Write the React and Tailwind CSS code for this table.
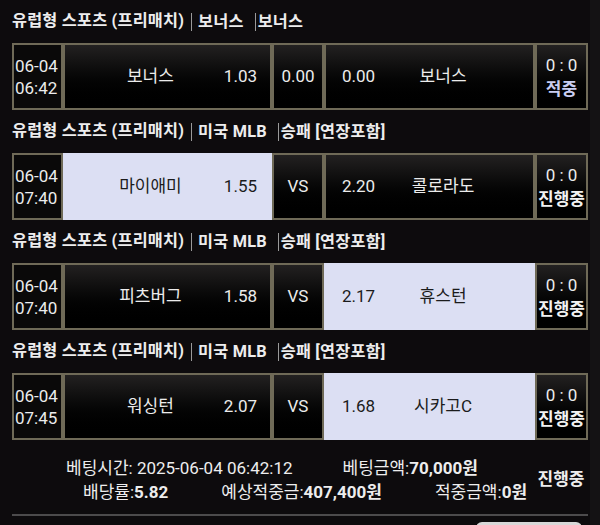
const bets = [
  {
    tags: ['보너스', '보너스'],
    date: '06-04',
    time: '06:42',
    home: '보너스',
    homeOdds: '1.03',
    mid: '0.00',
    awayOdds: '0.00',
    away: '보너스',
    status: '적중',
    pick: null,
  },
  {
    tags: ['미국 MLB', '승패 [연장포함]'],
    date: '06-04',
    time: '07:40',
    home: '마이애미',
    homeOdds: '1.55',
    mid: 'VS',
    awayOdds: '2.20',
    away: '콜로라도',
    status: '진행중',
    pick: 'home',
  },
  {
    tags: ['미국 MLB', '승패 [연장포함]'],
    date: '06-04',
    time: '07:40',
    home: '피츠버그',
    homeOdds: '1.58',
    mid: 'VS',
    awayOdds: '2.17',
    away: '휴스턴',
    status: '진행중',
    pick: 'away',
  },
  {
    tags: ['미국 MLB', '승패 [연장포함]'],
    date: '06-04',
    time: '07:45',
    home: '워싱턴',
    homeOdds: '2.07',
    mid: 'VS',
    awayOdds: '1.68',
    away: '시카고C',
    status: '진행중',
    pick: 'away',
  },
]

const dark = 'border-2 border-[#6f6a57] bg-gradient-to-b from-[#232121] via-[#070707] to-black text-[#ececec]'
const picked = 'border-2 border-[#dcdff3] bg-[#dcdff3] text-[#1b1b1b]'

function BetRow({ bet }) {
  return (
    <div>
      {/* league header */}
      <div className="h-[43px] flex items-center text-[16.3px] font-bold text-[#ededed] tracking-[0.2px]">
        <span>유럽형 스포츠 (프리매치)</span>
        <span className="ml-[7px] pl-[6px] border-l border-[#9a9a9a] leading-[18px]">{bet.tags[0]}</span>
        <span className="ml-[11px] pl-[2px] border-l border-[#9a9a9a] leading-[18px]">{bet.tags[1]}</span>
      </div>

      <div className="flex h-[67px] text-[17px]">
        <div className="w-[51px] flex flex-col justify-center pl-[1px] leading-[22px] border-2 border-[#6f6a57] bg-[#0a0909] text-[#ececec]">
          <span>{bet.date}</span>
          <span>{bet.time}</span>
        </div>
        <div className={`w-[209px] flex items-center pr-[13px] ${bet.pick === 'home' ? picked : dark}`}>
          <span className="flex-1 text-center pl-[12px]">{bet.home}</span>
          <span>{bet.homeOdds}</span>
        </div>
        <div className={`w-[52px] flex items-center justify-center ${dark}`}>{bet.mid}</div>
        <div className={`w-[211px] flex items-center pl-[16px] ${bet.pick === 'away' ? picked : dark}`}>
          <span>{bet.awayOdds}</span>
          <span className="flex-1 text-center pr-[22px]">{bet.away}</span>
        </div>
        <div className={`w-[53px] flex flex-col items-center justify-center leading-[24px] ${dark}`}>
          <span>0 : 0</span>
          <span className={`font-bold ${bet.status === '적중' ? 'text-[#c9cdf1]' : 'text-[#f2f2f2]'}`}>{bet.status}</span>
        </div>
      </div>
    </div>
  )
}

export default function App() {
  return (
    <div className="w-[600px] h-[525px] overflow-hidden bg-[#141214] font-['Roboto','Noto_Sans_CJK_KR',sans-serif]">
      <div className="w-[590px] h-full bg-[#0d0b0d] px-[12px] pr-[2px]">
        {bets.map((bet, i) => (
          <BetRow key={i} bet={bet} />
        ))}

        {/* summary */}
        <div className="flex h-[74px] items-center text-[17px] text-[#ededed]">
          <div className="flex-1 flex flex-col leading-[24px] pt-[6px]">
            <div className="flex gap-[50px] pl-[54px]">
              <span>베팅시간: 2025-06-04 06:42:12</span>
              <span>베팅금액:<b>70,000원</b></span>
            </div>
            <div className="flex gap-[53px] pl-[71px]">
              <span>배당률:<b>5.82</b></span>
              <span>예상적중금:<b>407,400원</b></span>
              <span>적중금액:<b>0원</b></span>
            </div>
          </div>
          <div className="w-[54px] text-center font-bold pt-[6px]">진행중</div>
        </div>
        <div className="h-[2px] bg-[#4c4b4c]" />
        <div className="flex justify-end pt-[6px] pr-[6px]">
          <div className="w-[106px] h-[20px] rounded-t-[6px] bg-[#d8d8d8]" />
        </div>
      </div>
    </div>
  )
}
